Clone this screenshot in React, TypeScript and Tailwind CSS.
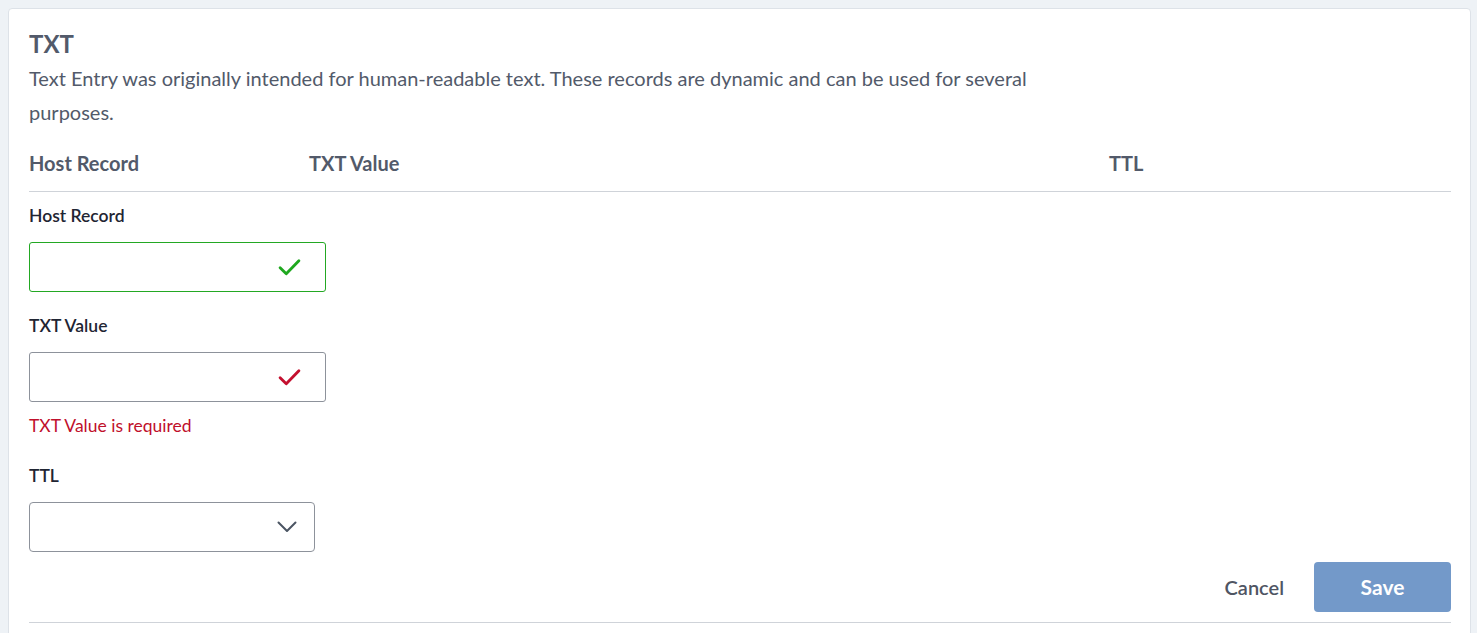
import { useState } from "react";

const font = { fontFamily: "Lato, 'Open Sans', sans-serif" };

function Check({ className }: { className: string }) {
  return (
    <svg viewBox="0 0 24 18" className={className} fill="none">
      <path d="M2.2 9.8 L8.6 16 L21.8 2.4" stroke="currentColor" strokeWidth="3" strokeLinecap="round" strokeLinejoin="round" />
    </svg>
  );
}

function Chevron() {
  return (
    <svg viewBox="0 0 20 12" className="h-[12px] w-[20px] text-[#4b5563]" fill="none">
      <path d="M1.5 1.5 L10 10 L18.5 1.5" stroke="currentColor" strokeWidth="2" strokeLinecap="round" strokeLinejoin="round" />
    </svg>
  );
}

export default function App() {
  const [host, setHost] = useState("");
  const [value, setValue] = useState("");

  return (
    <div className="min-h-screen bg-[#eef2f6] pl-2 pr-[6px] pt-2" style={font}>
      <div className="h-[640px] rounded-t-[4px] border border-[#dde2e8] bg-white pl-5 pr-[19px] pt-[21px]">
        <h2 className="text-[24px] font-bold leading-[28px] text-[#525a6a]">TXT</h2>
        <p className="mt-[3px] max-w-[1030px] text-[20px] leading-[34px] text-[#525a6a]">
          Text Entry was originally intended for human-readable text. These records are dynamic and can be used for
          several purposes.
        </p>

        <div className="mt-[22px] flex border-b border-[#cfd3d9] pb-[16px] text-[20px] font-bold leading-[24px] text-[#525a6a]">
          <div className="w-[280px]">Host Record</div>
          <div className="w-[800px]">TXT Value</div>
          <div>TTL</div>
        </div>

        <label className="mt-[14px] block text-[17.5px] font-semibold leading-[20px] text-[#1f2533]">Host Record</label>
        <div className="mt-[16px] flex h-[50px] w-[297px] items-center rounded-[3px] border border-[#23a823] pl-3 pr-6">
          <input
            value={host}
            onChange={(e) => setHost(e.target.value)}
            className="h-full flex-1 bg-transparent text-[16px] outline-none"
          />
          <Check className="h-[18px] w-[23px] text-[#1fa81f]" />
        </div>

        <label className="mt-[24px] block text-[17.5px] font-semibold leading-[20px] text-[#1f2533]">TXT Value</label>
        <div className="mt-[16px] flex h-[50px] w-[297px] items-center rounded-[3px] border border-[#8d929b] pl-3 pr-6">
          <input
            value={value}
            onChange={(e) => setValue(e.target.value)}
            className="h-full flex-1 bg-transparent text-[16px] outline-none"
          />
          <Check className="h-[18px] w-[23px] text-[#c4102f]" />
        </div>
        <p className="mt-[14px] text-[17.5px] leading-[20px] text-[#c0102c]">TXT Value is required</p>

        <label className="mt-[30px] block text-[17.5px] font-semibold leading-[20px] text-[#1f2533]">TTL</label>
        <button className="mt-[16px] flex h-[50px] w-[286px] items-center justify-end rounded-[4px] border border-[#8d929b] pr-[17px]">
          <Chevron />
        </button>

        <div className="mt-[10px] flex items-center justify-end gap-[30px] border-b border-[#cfd3d9] pb-[10px]">
          <button className="text-[20px] font-semibold text-[#4f5563]">Cancel</button>
          <button className="h-[50px] w-[137px] rounded-[4px] bg-[#7399c9] text-[21px] font-bold text-white">Save</button>
        </div>
      </div>
    </div>
  );
}
